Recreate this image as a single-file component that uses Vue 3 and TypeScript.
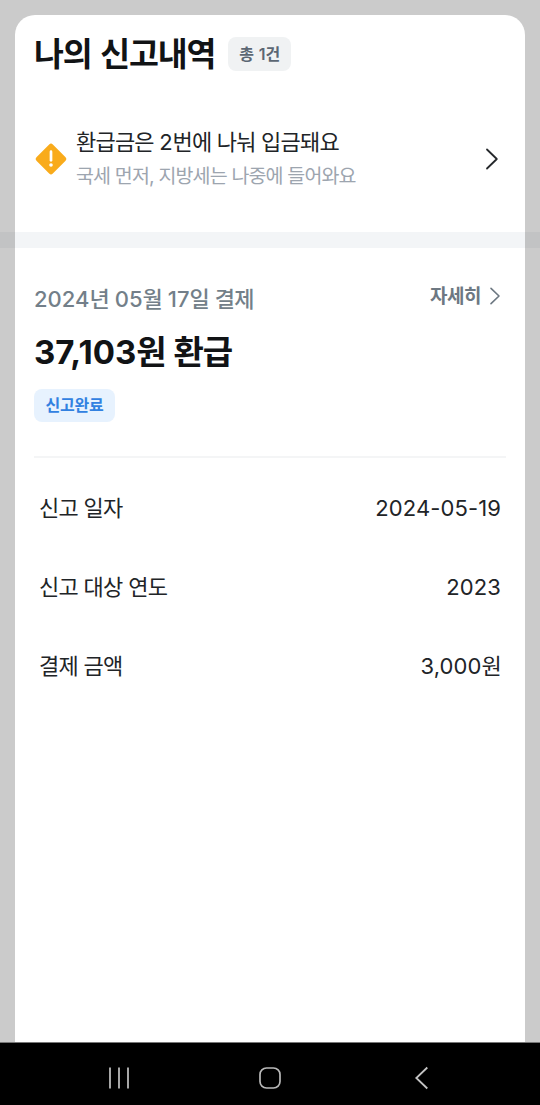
<script setup lang="ts">
interface DetailRow {
  label: string
  value: string
  unit?: string
}

const rows: DetailRow[] = [
  { label: '신고 일자', value: '2024-05-19' },
  { label: '신고 대상 연도', value: '2023' },
  { label: '결제 금액', value: '3,000', unit: '원' },
]
</script>

<template>
  <div class="screen">
    <main class="sheet">
      <header class="heading">
        <h1>나의 신고내역</h1>
        <span class="count">총 <span class="num">1</span>건</span>
      </header>

      <section class="notice">
        <svg class="warn" width="34" height="34" viewBox="0 0 34 34">
          <rect x="5.4" y="5.4" width="23.2" height="23.2" rx="2.6" fill="#f9ab1b" transform="rotate(45 17 17)" />
          <path d="M17 9.7v8.6" stroke="#fff" stroke-width="2.7" stroke-linecap="round" />
          <circle cx="17" cy="23" r="1.8" fill="#fff" />
        </svg>
        <div class="notice-text">
          <p class="notice-title">환급금은 <span class="num">2</span>번에 나눠 입금돼요</p>
          <p class="notice-sub">국세 먼저, 지방세는 나중에 들어와요</p>
        </div>
        <svg class="notice-arrow" width="14" height="24" viewBox="0 0 14 24">
          <path d="M2 2.5L11.8 12L2 21.5" fill="none" stroke="#25282b" stroke-width="1.8" stroke-linecap="round" stroke-linejoin="round" />
        </svg>
      </section>

      <div class="band"></div>

      <section class="summary">
        <div class="summary-top">
          <p class="date"><span class="num">2024</span>년 <span class="num">05</span>월 <span class="num">17</span>일 결제</p>
          <div class="more">
            <span>자세히</span>
            <svg width="12" height="20" viewBox="0 0 12 20">
              <path d="M2 2.3L10 10L2 17.7" fill="none" stroke="#6d7882" stroke-width="1.6" stroke-linecap="round" stroke-linejoin="round" />
            </svg>
          </div>
        </div>
        <p class="amount"><span class="num">37,103</span>원 환급</p>
        <span class="status">신고완료</span>
      </section>

      <dl class="details">
        <div v-for="row in rows" :key="row.label" class="row">
          <dt>{{ row.label }}</dt>
          <dd><span class="num">{{ row.value }}</span>{{ row.unit }}</dd>
        </div>
      </dl>
    </main>

    <nav class="navbar">
      <svg width="24" height="24" viewBox="0 0 24 24">
        <path d="M3 1.5v21M12 1.5v21M21 1.5v21" stroke="#b9b9b9" stroke-width="1.8" />
      </svg>
      <svg width="24" height="24" viewBox="0 0 24 24">
        <rect x="2" y="2" width="20" height="20" rx="6.5" fill="none" stroke="#b9b9b9" stroke-width="1.7" />
      </svg>
      <svg width="24" height="24" viewBox="0 0 24 24">
        <path d="M18.3 1.5L7.3 12L18.3 22.5" fill="none" stroke="#c4c4c4" stroke-width="1.8" />
      </svg>
    </nav>
  </div>
</template>

<style>
body {
  margin: 0;
}
</style>

<style scoped>
.screen {
  width: 540px;
  height: 1105px;
  display: flex;
  flex-direction: column;
  box-sizing: border-box;
  padding-top: 15px;
  background: #cbcbcb;
  color: #212427;
  font-family: Inter, "Noto Sans CJK KR", sans-serif;
  overflow: hidden;
}
h1, p, dl, dt, dd {
  margin: 0;
}
.num {
  letter-spacing: 0;
}
.sheet {
  flex: 1;
  margin: 0 15px;
  background: #fff;
  border-radius: 20px 20px 0 0;
}
.heading {
  display: flex;
  align-items: center;
  gap: 12px;
  height: 78px;
  padding-left: 19px;
}
h1 {
  width: 182px;
  padding-top: 2px;
  font-size: 32.5px;
  line-height: 40px;
  font-weight: 700;
  letter-spacing: -1.1px;
  word-spacing: 2px;
  color: #111315;
  white-space: nowrap;
}
.count {
  height: 34px;
  width: 63px;
  border-radius: 8px;
  background: #f0f2f3;
  color: #5c6773;
  font-size: 16px;
  line-height: 34px;
  font-weight: 600;
  letter-spacing: -0.5px;
  word-spacing: 1.5px;
  text-align: center;
}
.notice {
  display: flex;
  align-items: center;
  height: 139px;
  padding: 0 26px 8px 19px;
  box-sizing: border-box;
}
.warn {
  flex: none;
}
.notice-text {
  flex: 1;
  margin: 0 0 0 8px;
  white-space: nowrap;
}
.notice-title {
  font-size: 22px;
  line-height: 34px;
  letter-spacing: -0.8px;
}
.notice-sub {
  font-size: 19.5px;
  line-height: 34px;
  letter-spacing: -0.85px;
  color: #9da5af;
}
.band {
  height: 16px;
  margin: 0 -15px;
  border: solid #c2c3c4;
  border-width: 0 15px;
  background: #f3f5f7;
}
.summary {
  margin: 0 19px;
  height: 208px;
  border-bottom: 2px solid #f4f5f6;
}
.summary-top {
  display: flex;
  justify-content: space-between;
  padding: 33px 5px 0 0;
}
.date {
  font-size: 22px;
  line-height: 36px;
  font-weight: 500;
  letter-spacing: -0.8px;
  word-spacing: 0.8px;
  color: #737f89;
}
.more {
  display: flex;
  align-items: center;
  gap: 8px;
  height: 30px;
  font-size: 19px;
  line-height: 26px;
  font-weight: 600;
  letter-spacing: -0.5px;
  color: #6d7882;
}
.more span {
  margin-top: 1px;
}
.amount {
  margin-top: 15px;
  font-size: 33px;
  line-height: 40px;
  font-weight: 700;
  letter-spacing: -1.2px;
  word-spacing: 1.5px;
  color: #111315;
}
.status {
  display: block;
  width: 81px;
  height: 33px;
  margin-top: 17px;
  border-radius: 8px;
  background: #e7f2fe;
  color: #3181e1;
  font-size: 16px;
  line-height: 33px;
  font-weight: 600;
  letter-spacing: -0.2px;
  text-align: center;
}
.details {
  padding: 11px 24px 0;
}
.row {
  display: flex;
  justify-content: space-between;
  align-items: center;
  height: 78.7px;
  font-size: 22px;
  line-height: 32px;
  letter-spacing: -0.7px;
}
.row .num {
  letter-spacing: 0.1px;
}
.navbar {
  height: 63px;
  display: flex;
  justify-content: space-between;
  align-items: center;
  box-sizing: border-box;
  padding: 7px 107px 0 107px;
  border-top: 1px solid #777;
  background: #000;
}
</style>
